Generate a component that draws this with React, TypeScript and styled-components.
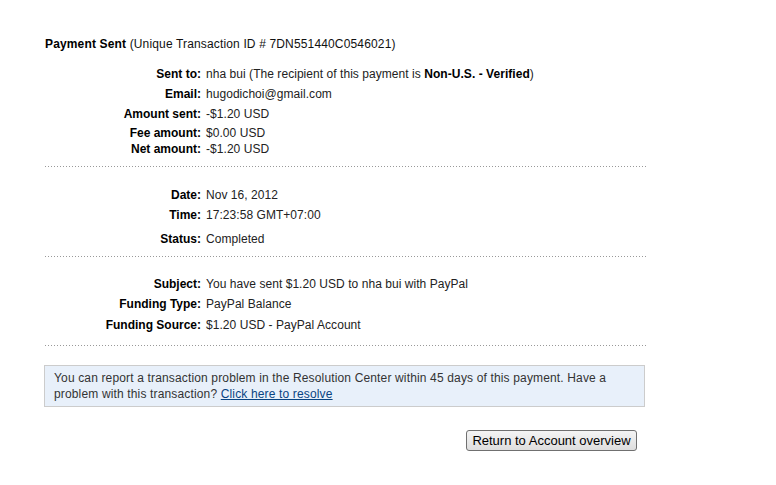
import React from 'react';
import styled, { createGlobalStyle } from 'styled-components';

const GlobalStyle = createGlobalStyle`
  body {
    margin: 0;
    background: #ffffff;
    font-family: 'Liberation Sans', Arial, sans-serif;
    font-size: 12px;
    color: #333333;
  }
`;

type Detail = { label: string; value: React.ReactNode; gap: number };

const sentRows: Detail[] = [
  {
    label: 'Sent to:',
    value: (
      <>
        nha bui (The recipient of this payment is <b>Non-U.S. - Verified</b>)
      </>
    ),
    gap: 15,
  },
  { label: 'Email:', value: 'hugodichoi@gmail.com', gap: 5 },
  { label: 'Amount sent:', value: '-$1.20 USD', gap: 5 },
  { label: 'Fee amount:', value: '$0.00 USD', gap: 4 },
  { label: 'Net amount:', value: '-$1.20 USD', gap: 1 },
];

const dateRows: Detail[] = [
  { label: 'Date:', value: 'Nov 16, 2012', gap: 21 },
  { label: 'Time:', value: '17:23:58 GMT+07:00', gap: 5 },
  { label: 'Status:', value: 'Completed', gap: 9 },
];

const fundingRows: Detail[] = [
  {
    label: 'Subject:',
    value: 'You have sent $1.20 USD to nha bui with PayPal',
    gap: 20,
  },
  { label: 'Funding Type:', value: 'PayPal Balance', gap: 5 },
  { label: 'Funding Source:', value: '$1.20 USD - PayPal Account', gap: 6 },
];

const renderRows = (rows: Detail[]) =>
  rows.map((row) => (
    <Row key={row.label} $gap={row.gap}>
      <Label>{row.label}</Label>
      <Value>{row.value}</Value>
    </Row>
  ));

const App = () => {
  return (
    <Page>
      <GlobalStyle />
      <Title>
        <b>Payment Sent</b> (Unique Transaction ID # 7DN551440C0546021)
      </Title>
      {renderRows(sentRows)}
      <Divider $gap={9} />
      {renderRows(dateRows)}
      <Divider $gap={9} />
      {renderRows(fundingRows)}
      <Divider $gap={12} />
      <Notice>
        You can report a transaction problem in the Resolution Center within 45
        days of this payment. Have a problem with this transaction?{' '}
        <a href="#resolve">Click here to resolve</a>
      </Notice>
      <Actions>
        <ReturnButton>Return to Account overview</ReturnButton>
      </Actions>
    </Page>
  );
};

export default App;

const Page = styled.div`
  width: 602px;
  padding: 37px 0 0 45px;
`;

const Title = styled.div`
  line-height: 15px;
  color: #111111;
  letter-spacing: 0.15px;

  b {
    color: #000000;
  }
`;

const Row = styled.div<{ $gap: number }>`
  display: flex;
  margin-top: ${(p) => p.$gap}px;
  line-height: 15px;
`;

const Label = styled.div`
  flex: 0 0 156px;
  text-align: right;
  font-weight: bold;
  color: #000000;
`;

const Value = styled.div`
  margin-left: 5px;
  color: #222222;
  letter-spacing: 0.05px;

  b {
    color: #000000;
  }
`;

const Divider = styled.div<{ $gap: number }>`
  width: 602px;
  height: 1px;
  margin-top: ${(p) => p.$gap}px;
  background-image: linear-gradient(to right, #999999 1px, transparent 1px);
  background-size: 3px 1px;
`;

const Notice = styled.div`
  width: 581px;
  margin: 19px 0 0 -1px;
  padding: 4px 9px 4px 9px;
  border: 1px solid #cccccc;
  background: #e8f0fa;
  line-height: 16px;
  color: #333333;
  letter-spacing: 0.15px;

  a {
    color: #084482;
    text-decoration: underline;
  }
`;

const Actions = styled.div`
  display: flex;
  justify-content: flex-end;
  width: 592px;
  margin-top: 23px;
`;

const ReturnButton = styled.button`
  width: 171px;
  height: 21px;
  padding: 0;
  border: 1px solid #707070;
  border-radius: 3px;
  background: linear-gradient(#f4f4f4, #dedede);
  font-family: 'Liberation Sans', Arial, sans-serif;
  font-size: 13px;
  color: #000000;
`;
